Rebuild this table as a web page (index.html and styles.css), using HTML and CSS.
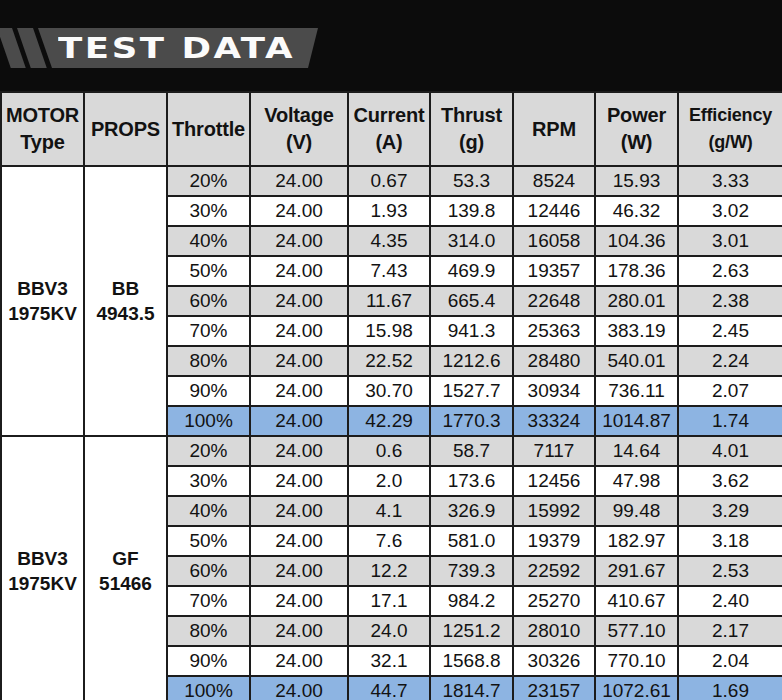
FILE: index.html
```html
<!DOCTYPE html>
<html>
<head>
<meta charset="utf-8">
<link rel="stylesheet" href="styles.css">
</head>
<body>
<header class="top">
  <div class="banner">
    <span class="stripe s1"></span>
    <span class="stripe s2"></span>
    <div class="plate"><span class="title">TEST DATA</span></div>
  </div>
</header>
<table class="data">
  <colgroup>
    <col style="width:83px"><col style="width:83px"><col style="width:83px"><col style="width:98px"><col style="width:82px"><col style="width:83px"><col style="width:82px"><col style="width:83px"><col style="width:105px">
  </colgroup>
  <thead>
    <tr>
      <th>MOTOR<br>Type</th><th>PROPS</th><th>Throttle</th><th>Voltage<br>(V)</th><th>Current<br>(A)</th><th>Thrust<br>(g)</th><th>RPM</th><th>Power<br>(W)</th><th class="eff">Efficiency<br>(g/W)</th>
    </tr>
  </thead>
  <tbody>
    <tr class="g"><td class="m" rowspan="9">BBV3<br>1975KV</td><td class="m" rowspan="9">BB<br>4943.5</td><td>20%</td><td>24.00</td><td>0.67</td><td>53.3</td><td>8524</td><td>15.93</td><td>3.33</td></tr>
    <tr class="w"><td>30%</td><td>24.00</td><td>1.93</td><td>139.8</td><td>12446</td><td>46.32</td><td>3.02</td></tr>
    <tr class="g"><td>40%</td><td>24.00</td><td>4.35</td><td>314.0</td><td>16058</td><td>104.36</td><td>3.01</td></tr>
    <tr class="w"><td>50%</td><td>24.00</td><td>7.43</td><td>469.9</td><td>19357</td><td>178.36</td><td>2.63</td></tr>
    <tr class="g"><td>60%</td><td>24.00</td><td>11.67</td><td>665.4</td><td>22648</td><td>280.01</td><td>2.38</td></tr>
    <tr class="w"><td>70%</td><td>24.00</td><td>15.98</td><td>941.3</td><td>25363</td><td>383.19</td><td>2.45</td></tr>
    <tr class="g"><td>80%</td><td>24.00</td><td>22.52</td><td>1212.6</td><td>28480</td><td>540.01</td><td>2.24</td></tr>
    <tr class="w"><td>90%</td><td>24.00</td><td>30.70</td><td>1527.7</td><td>30934</td><td>736.11</td><td>2.07</td></tr>
    <tr class="b"><td>100%</td><td>24.00</td><td>42.29</td><td>1770.3</td><td>33324</td><td>1014.87</td><td>1.74</td></tr>
    <tr class="g"><td class="m" rowspan="9">BBV3<br>1975KV</td><td class="m" rowspan="9">GF<br>51466</td><td>20%</td><td>24.00</td><td>0.6</td><td>58.7</td><td>7117</td><td>14.64</td><td>4.01</td></tr>
    <tr class="w"><td>30%</td><td>24.00</td><td>2.0</td><td>173.6</td><td>12456</td><td>47.98</td><td>3.62</td></tr>
    <tr class="g"><td>40%</td><td>24.00</td><td>4.1</td><td>326.9</td><td>15992</td><td>99.48</td><td>3.29</td></tr>
    <tr class="w"><td>50%</td><td>24.00</td><td>7.6</td><td>581.0</td><td>19379</td><td>182.97</td><td>3.18</td></tr>
    <tr class="g"><td>60%</td><td>24.00</td><td>12.2</td><td>739.3</td><td>22592</td><td>291.67</td><td>2.53</td></tr>
    <tr class="w"><td>70%</td><td>24.00</td><td>17.1</td><td>984.2</td><td>25270</td><td>410.67</td><td>2.40</td></tr>
    <tr class="g"><td>80%</td><td>24.00</td><td>24.0</td><td>1251.2</td><td>28010</td><td>577.10</td><td>2.17</td></tr>
    <tr class="w"><td>90%</td><td>24.00</td><td>32.1</td><td>1568.8</td><td>30326</td><td>770.10</td><td>2.04</td></tr>
    <tr class="b"><td>100%</td><td>24.00</td><td>44.7</td><td>1814.7</td><td>23157</td><td>1072.61</td><td>1.69</td></tr>
  </tbody>
</table>
</body>
</html>
```
FILE: styles.css
```css
html, body {
  margin: 0;
  padding: 0;
  background: #0c0c0c;
  overflow: hidden;
}
body {
  width: 782px;
  height: 700px;
  font-family: "Liberation Sans", Arial, sans-serif;
}
.top {
  height: 91px;
  padding-top: 28px;
  box-sizing: border-box;
}
.banner {
  display: flex;
  height: 40px;
  margin-left: -3px;
}
.stripe {
  display: block;
  height: 40px;
  background: #4b4b4b;
  transform: skewX(19deg);
  transform-origin: top left;
  margin-right: 5px;
}
.s1 { width: 15px; }
.s2 { width: 16px; }
.plate {
  width: 280px;
  height: 40px;
  margin-left: 0;
  background: #4b4b4b;
  clip-path: polygon(0 0, 100% 0, calc(100% - 10px) 100%, 14px 100%);
  display: flex;
  align-items: center;
  padding-left: 20px;
  box-sizing: border-box;
}
.title {
  display: inline-block;
  color: #fbfbfb;
  font-family: "DejaVu Sans", sans-serif;
  font-weight: bold;
  font-size: 28px;
  letter-spacing: 2px;
  line-height: 1;
  transform: scaleX(1.27);
  transform-origin: left center;
  margin-top: 1px;
}
.data {
  border-collapse: collapse;
  table-layout: fixed;
  width: 784px;
  background: #fff;
}
.data th, .data td {
  border: 2px solid #1c1c1c;
  text-align: center;
  vertical-align: middle;
  padding: 0;
  color: #121212;
}
.data th {
  height: 72px;
  background: #d9d9d9;
  font-size: 20px;
  font-weight: bold;
  line-height: 27px;
  letter-spacing: -0.2px;
}
.data th.eff {
  font-size: 18px;
}
.data td {
  height: 28px;
  font-size: 19px;
  line-height: 22px;
}
.data td.m {
  background: #fff;
  font-weight: bold;
  font-size: 19px;
  line-height: 25px;
}
.g td { background: #d9d9d9; }
.w td { background: #ffffff; }
.b td { background: #8db4e2; }
```
